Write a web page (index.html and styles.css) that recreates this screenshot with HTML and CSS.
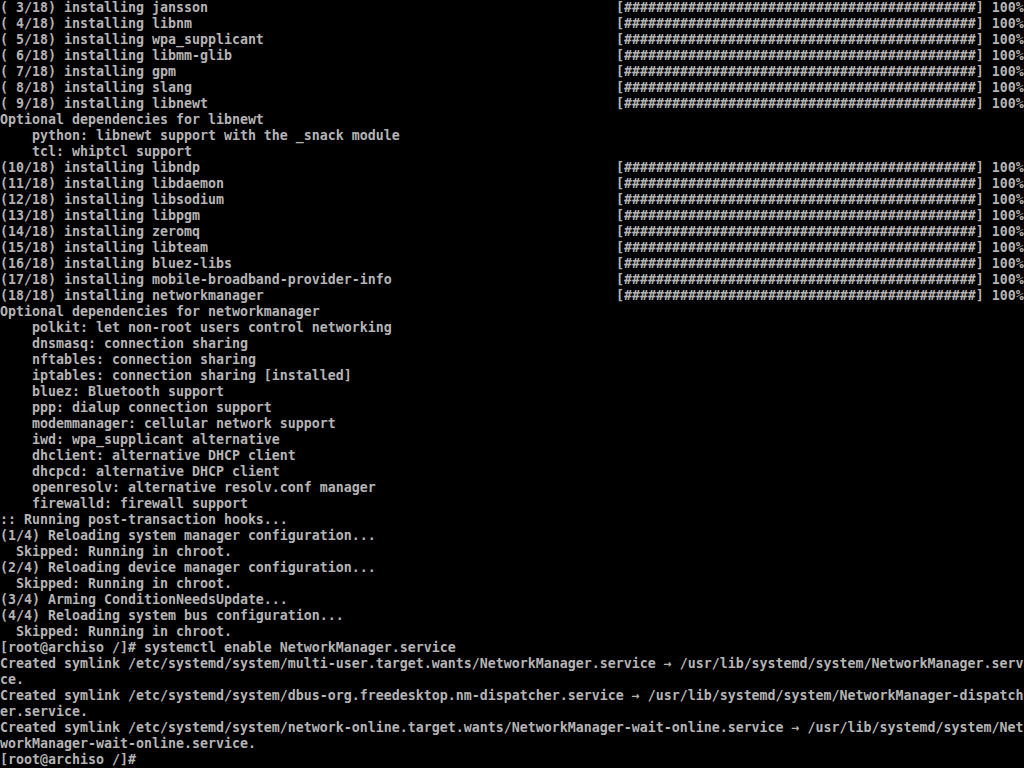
FILE: index.html
```html
<!DOCTYPE html>
<html lang="en">
<head>
<meta charset="utf-8">
<title>archiso console</title>
<link rel="stylesheet" href="styles.css">
</head>
<body>
<div class="term">
<div class="row"><span class="l">( 3/18) installing jansson</span><span class="bar">[############################################] 100%</span></div>
<div class="row"><span class="l">( 4/18) installing libnm</span><span class="bar">[############################################] 100%</span></div>
<div class="row"><span class="l">( 5/18) installing wpa_supplicant</span><span class="bar">[############################################] 100%</span></div>
<div class="row"><span class="l">( 6/18) installing libmm-glib</span><span class="bar">[############################################] 100%</span></div>
<div class="row"><span class="l">( 7/18) installing gpm</span><span class="bar">[############################################] 100%</span></div>
<div class="row"><span class="l">( 8/18) installing slang</span><span class="bar">[############################################] 100%</span></div>
<div class="row"><span class="l">( 9/18) installing libnewt</span><span class="bar">[############################################] 100%</span></div>
<div class="row">Optional dependencies for libnewt</div>
<div class="row">    python: libnewt support with the _snack module</div>
<div class="row">    tcl: whiptcl support</div>
<div class="row"><span class="l">(10/18) installing libndp</span><span class="bar">[############################################] 100%</span></div>
<div class="row"><span class="l">(11/18) installing libdaemon</span><span class="bar">[############################################] 100%</span></div>
<div class="row"><span class="l">(12/18) installing libsodium</span><span class="bar">[############################################] 100%</span></div>
<div class="row"><span class="l">(13/18) installing libpgm</span><span class="bar">[############################################] 100%</span></div>
<div class="row"><span class="l">(14/18) installing zeromq</span><span class="bar">[############################################] 100%</span></div>
<div class="row"><span class="l">(15/18) installing libteam</span><span class="bar">[############################################] 100%</span></div>
<div class="row"><span class="l">(16/18) installing bluez-libs</span><span class="bar">[############################################] 100%</span></div>
<div class="row"><span class="l">(17/18) installing mobile-broadband-provider-info</span><span class="bar">[############################################] 100%</span></div>
<div class="row"><span class="l">(18/18) installing networkmanager</span><span class="bar">[############################################] 100%</span></div>
<div class="row">Optional dependencies for networkmanager</div>
<div class="row">    polkit: let non-root users control networking</div>
<div class="row">    dnsmasq: connection sharing</div>
<div class="row">    nftables: connection sharing</div>
<div class="row">    iptables: connection sharing [installed]</div>
<div class="row">    bluez: Bluetooth support</div>
<div class="row">    ppp: dialup connection support</div>
<div class="row">    modemmanager: cellular network support</div>
<div class="row">    iwd: wpa_supplicant alternative</div>
<div class="row">    dhclient: alternative DHCP client</div>
<div class="row">    dhcpcd: alternative DHCP client</div>
<div class="row">    openresolv: alternative resolv.conf manager</div>
<div class="row">    firewalld: firewall support</div>
<div class="row">:: Running post-transaction hooks...</div>
<div class="row">(1/4) Reloading system manager configuration...</div>
<div class="row">  Skipped: Running in chroot.</div>
<div class="row">(2/4) Reloading device manager configuration...</div>
<div class="row">  Skipped: Running in chroot.</div>
<div class="row">(3/4) Arming ConditionNeedsUpdate...</div>
<div class="row">(4/4) Reloading system bus configuration...</div>
<div class="row">  Skipped: Running in chroot.</div>
<div class="row">[root@archiso /]# systemctl enable NetworkManager.service</div>
<div class="row">Created symlink /etc/systemd/system/multi-user.target.wants/NetworkManager.service → /usr/lib/systemd/system/NetworkManager.servi</div>
<div class="row">ce.</div>
<div class="row">Created symlink /etc/systemd/system/dbus-org.freedesktop.nm-dispatcher.service → /usr/lib/systemd/system/NetworkManager-dispatch</div>
<div class="row">er.service.</div>
<div class="row">Created symlink /etc/systemd/system/network-online.target.wants/NetworkManager-wait-online.service → /usr/lib/systemd/system/Net</div>
<div class="row">workManager-wait-online.service.</div>
<div class="row">[root@archiso /]#</div>
</div>
</body>
</html>
```
FILE: styles.css
```css
html, body {
  margin: 0;
  padding: 0;
  background: #000;
  overflow: hidden;
}

.term {
  width: 1024px;
  height: 768px;
  overflow: hidden;
  background: #000;
  color: #b4b4b4;
  font-family: "DejaVu Sans Mono", "Liberation Mono", monospace;
  font-size: 13.29px;
  font-weight: bold;
  display: flex;
  flex-direction: column;
}

.row {
  height: 16px;
  line-height: 16px;
  white-space: pre;
  overflow: hidden;
}

.l {
  display: inline-block;
  width: 616px;
}

.bar {
  display: inline-block;
}
```
